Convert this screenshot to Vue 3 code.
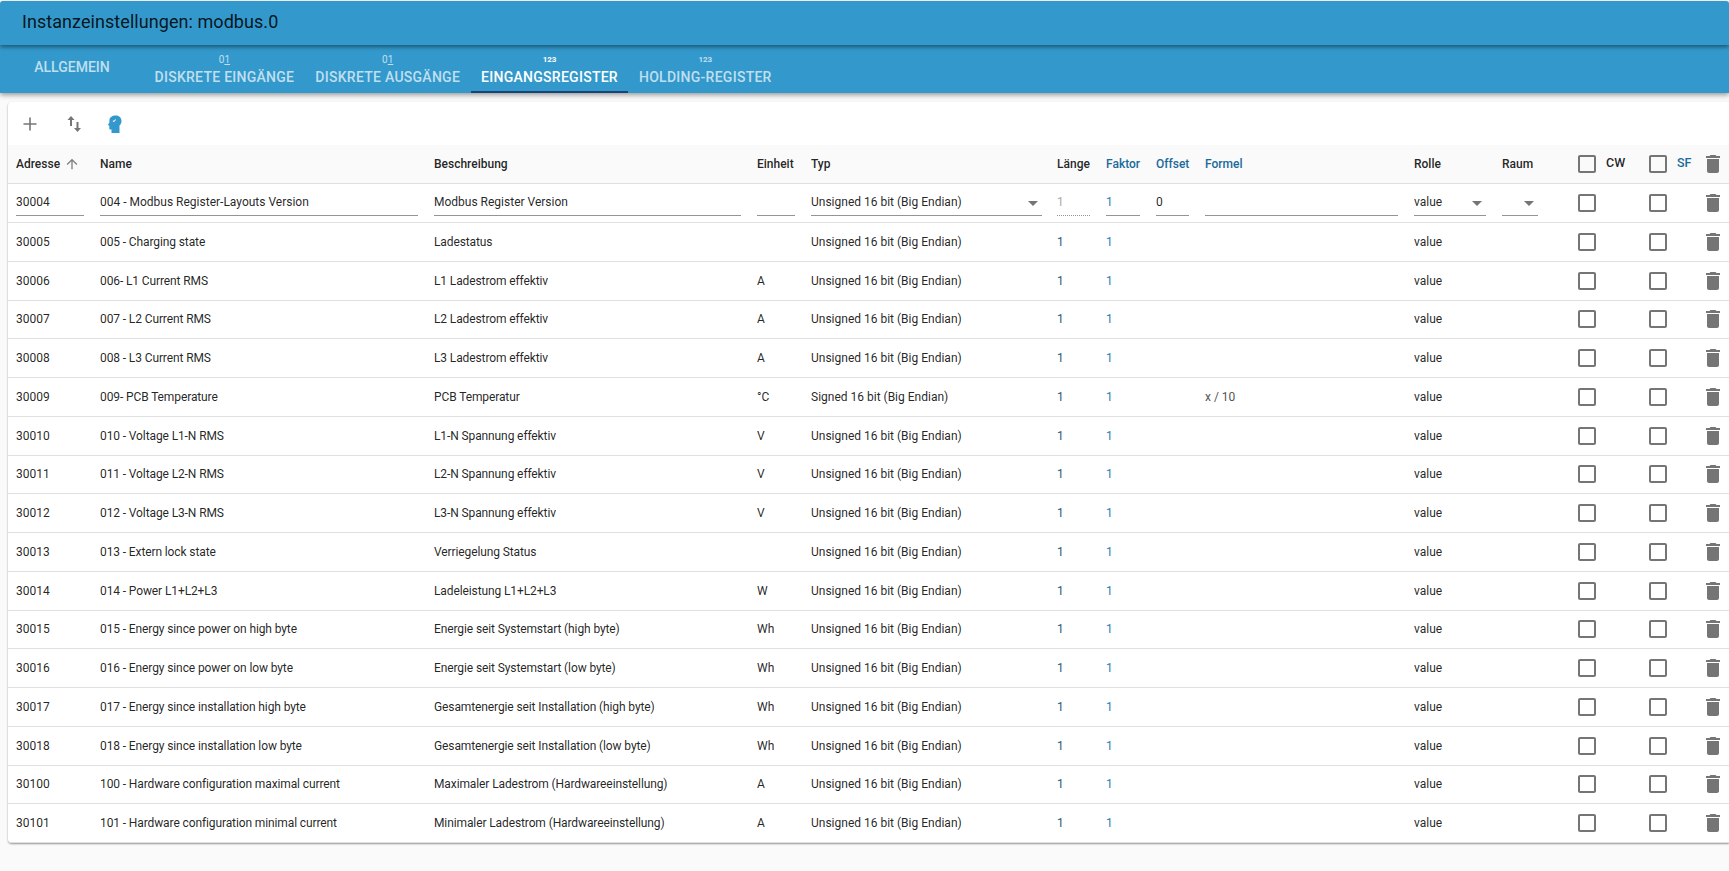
<script setup>
const rows = [
  ['30005','005 - Charging state','Ladestatus','','Unsigned 16 bit (Big Endian)',''],
  ['30006','006- L1 Current RMS','L1 Ladestrom effektiv','A','Unsigned 16 bit (Big Endian)',''],
  ['30007','007 - L2 Current RMS','L2 Ladestrom effektiv','A','Unsigned 16 bit (Big Endian)',''],
  ['30008','008 - L3 Current RMS','L3 Ladestrom effektiv','A','Unsigned 16 bit (Big Endian)',''],
  ['30009','009- PCB Temperature','PCB Temperatur','°C','Signed 16 bit (Big Endian)','x / 10'],
  ['30010','010 - Voltage L1-N RMS','L1-N Spannung effektiv','V','Unsigned 16 bit (Big Endian)',''],
  ['30011','011 - Voltage L2-N RMS','L2-N Spannung effektiv','V','Unsigned 16 bit (Big Endian)',''],
  ['30012','012 - Voltage L3-N RMS','L3-N Spannung effektiv','V','Unsigned 16 bit (Big Endian)',''],
  ['30013','013 - Extern lock state','Verriegelung Status','','Unsigned 16 bit (Big Endian)',''],
  ['30014','014 - Power L1+L2+L3','Ladeleistung L1+L2+L3','W','Unsigned 16 bit (Big Endian)',''],
  ['30015','015 - Energy since power on high byte','Energie seit Systemstart (high byte)','Wh','Unsigned 16 bit (Big Endian)',''],
  ['30016','016 - Energy since power on low byte','Energie seit Systemstart (low byte)','Wh','Unsigned 16 bit (Big Endian)',''],
  ['30017','017 - Energy since installation high byte','Gesamtenergie seit Installation (high byte)','Wh','Unsigned 16 bit (Big Endian)',''],
  ['30018','018 - Energy since installation low byte','Gesamtenergie seit Installation (low byte)','Wh','Unsigned 16 bit (Big Endian)',''],
  ['30100','100 - Hardware configuration maximal current','Maximaler Ladestrom (Hardwareeinstellung)','A','Unsigned 16 bit (Big Endian)',''],
  ['30101','101 - Hardware configuration minimal current','Minimaler Ladestrom (Hardwareeinstellung)','A','Unsigned 16 bit (Big Endian)',''],
]
const widths = [84,334,323,54,246,49,50,49,209,88,80,71,55,29]
const box = 'M19 5v14H5V5h14m0-2H5c-1.1 0-2 .9-2 2v14c0 1.1.9 2 2 2h14c1.1 0 2-.9 2-2V5c0-1.1-.9-2-2-2z'
const bin = 'M6 19c0 1.1.9 2 2 2h8c1.1 0 2-.9 2-2V7H6v12zM19 4h-3.5l-1-1h-5l-1 1H5v2h14V4z'
</script>

<template>
  <div class="page">
    <header class="title">Instanzeinstellungen: modbus.0</header>
    <nav class="tabs">
      <div class="tab first">Allgemein</div>
      <div class="tab"><small>0<u>1</u></small>Diskrete Eingänge</div>
      <div class="tab"><small>0<u>1</u></small>Diskrete Ausgänge</div>
      <div class="tab active"><small class="num">123</small>Eingangsregister</div>
      <div class="tab"><small class="num">123</small>Holding-Register</div>
    </nav>
    <main class="card">
      <div class="toolbar">
        <svg class="tool" viewBox="0 0 24 24"><path d="M18.500 12.800h-5.700v5.700h-1.600v-5.700H5.500v-1.600h5.700V5.500h1.600v5.700h5.700v1.600z"/></svg>
        <svg class="tool" viewBox="0 0 24 24"><path d="M9 4 5.500 8H8v6h2V8h2.500L9 4zm6.500 16 3.500-4h-2.500v-6h-2v6H12l3.500 4z"/></svg>
        <svg class="tool head" viewBox="0 0 24 24"><path d="M13 3.500c3.500 0 5.500 2.500 5.500 5.500 0 2-1 3.500-2 4.500v7.500h-8v-3.500H7.500c-.8 0-1.200-.6-1.200-1.300V14l-1-1c-.3-.3-.2-.8.100-1l1-1.500V8.500C6.400 5.500 9 3.500 13 3.500z"/><path class="spark" d="m9.500 9 2-.8 1-1.200.3 1.200-1.300 1-.5 1z"/></svg>
      </div>
      <table>
        <colgroup><col v-for="(w, i) in widths" :key="i" :style="{ width: w + 'px' }"></colgroup>
        <thead>
          <tr>
            <th>Adresse <svg class="sort" viewBox="0 0 24 24"><path d="m4 12 1.410 1.410L11 7.830V20h2V7.830l5.580 5.590L20 12l-8-8-8 8z"/></svg></th>
            <th>Name</th><th>Beschreibung</th><th>Einheit</th><th>Typ</th><th>Länge</th>
            <th class="hl">Faktor</th><th class="hl">Offset</th><th class="hl">Formel</th>
            <th>Rolle</th><th>Raum</th>
            <th class="boxcell"><span class="withlabel"><svg class="ic" viewBox="0 0 24 24"><path :d="box"/></svg><b>CW</b></span></th>
            <th class="boxcell"><span class="withlabel"><svg class="ic" viewBox="0 0 24 24"><path :d="box"/></svg><b class="hl">SF</b></span></th>
            <th class="bincell"><svg class="ic" viewBox="0 0 24 24"><path :d="bin"/></svg></th>
          </tr>
        </thead>
        <tbody>
          <tr class="edit">
            <td><div class="field">30004</div></td>
            <td><div class="field">004 - Modbus Register-Layouts Version</div></td>
            <td><div class="field">Modbus Register Version</div></td>
            <td><div class="field"></div></td>
            <td><div class="field select wide">Unsigned 16 bit (Big Endian)<i class="arrow"></i></div></td>
            <td><div class="field off">1</div></td>
            <td><div class="field blue">1</div></td>
            <td><div class="field">0</div></td>
            <td><div class="field"></div></td>
            <td><div class="field select">value<i class="arrow"></i></div></td>
            <td><div class="field select room"><i class="arrow"></i></div></td>
            <td class="boxcell"><svg class="ic" viewBox="0 0 24 24"><path :d="box"/></svg></td>
            <td class="boxcell"><svg class="ic" viewBox="0 0 24 24"><path :d="box"/></svg></td>
            <td class="bincell"><svg class="ic" viewBox="0 0 24 24"><path :d="bin"/></svg></td>
          </tr>
          <tr v-for="r in rows" :key="r[0]">
            <td>{{ r[0] }}</td><td class="tight">{{ r[1] }}</td><td class="tight">{{ r[2] }}</td><td>{{ r[3] }}</td><td>{{ r[4] }}</td>
            <td class="dark">1</td><td class="blue">1</td><td></td><td class="formula">{{ r[5] }}</td>
            <td>value</td><td></td>
            <td class="boxcell"><svg class="ic" viewBox="0 0 24 24"><path :d="box"/></svg></td>
            <td class="boxcell"><svg class="ic" viewBox="0 0 24 24"><path :d="box"/></svg></td>
            <td class="bincell"><svg class="ic" viewBox="0 0 24 24"><path :d="bin"/></svg></td>
          </tr>
        </tbody>
      </table>
    </main>
  </div>
</template>

<style>
html, body { margin: 0; background: #fafafa; }
</style>

<style scoped>
.page { height: 871px; overflow: hidden; background: #fafafa; font-family: Roboto, "Liberation Sans", sans-serif; color: rgba(0,0,0,.87); }
.title { box-sizing: border-box; height: 44px; margin-top: 1px; padding: 0 22px; background: #3399cc; line-height: 42px; font-size: 18px; letter-spacing: .06px; box-shadow: 0 2px 4px rgba(0,0,0,.45); position: relative; z-index: 2; border-radius: 3px 3px 0 0; }
.tabs { display: flex; height: 48px; background: #3399cc; box-shadow: 0 2px 5px rgba(0,0,0,.4); position: relative; z-index: 1; }
.tab { box-sizing: border-box; height: 48px; padding: 0 10.500px 7px; display: flex; flex-direction: column; align-items: center; justify-content: flex-end; font-size: 14px; font-weight: 500; letter-spacing: .27px; line-height: 17px; text-transform: uppercase; color: rgba(255,255,255,.7); white-space: nowrap; }
.tab.first { width: 144px; justify-content: center; padding-bottom: 4px; letter-spacing: 0; }
.tab small { font-size: 10px; font-weight: 400; line-height: 12px; margin-bottom: 3px; letter-spacing: 0; }
.tab small.num { font-size: 8px; font-weight: 700; }
.tab.active { color: #fff; border-bottom: 2px solid #164477; padding-bottom: 5px; }
.card { margin: 9px 0 0 8px; background: #fff; border-radius: 4px 0 0 4px; box-shadow: 0 1px 2px rgba(0,0,0,.4); overflow: hidden; }
.toolbar { height: 43px; display: flex; align-items: center; gap: 20px; padding-left: 10px; }
.tool { width: 24px; height: 24px; fill: #757575; }
.tool.head { fill: #3399cc; margin-left: -3px; }
.spark { fill: #fff; }
table { border-collapse: collapse; table-layout: fixed; width: 1721px; font-size: 12px; }
th, td { box-sizing: border-box; padding: 0 8px; text-align: left; white-space: nowrap; overflow: hidden; height: 38.750px; border-bottom: 1px solid #e0e0e0; }
th { background: #fafafa; font-weight: 500; color: rgba(0,0,0,.87); }
th:first-child { padding-right: 0; }
.tight { letter-spacing: -.11px; }
.hl, th b.hl { color: #1a6a9a; }
th b { font-weight: 500; font-size: 12.500px; }
.sort { width: 16px; height: 16px; vertical-align: -4px; fill: #808080; margin-left: 1px; }
.ic { width: 24px; height: 24px; fill: #757575; display: block; }
.boxcell { padding: 0 0 0 1px; }
.bincell { padding: 0 0 0 1px; }
.withlabel { display: flex; align-items: flex-start; }
.withlabel b { margin: 3px 0 0 7px; }
.edit .ic { margin-top: -1px; }
.field { box-sizing: border-box; height: 25px; margin-top: 1px; line-height: 23px; border-bottom: 1px solid #949494; position: relative; }
.wide { margin-right: -1px; }
.room { width: 36px; }
.select .arrow { position: absolute; right: 4px; top: 10px; border: 5px solid transparent; border-top-color: #757575; border-bottom: 0; }
.off { color: #aaa; border-bottom: 1px dotted #949494; }
.blue { color: #2b80b3; }
.dark { color: #2a5a78; }
.formula { color: #555; }
</style>
